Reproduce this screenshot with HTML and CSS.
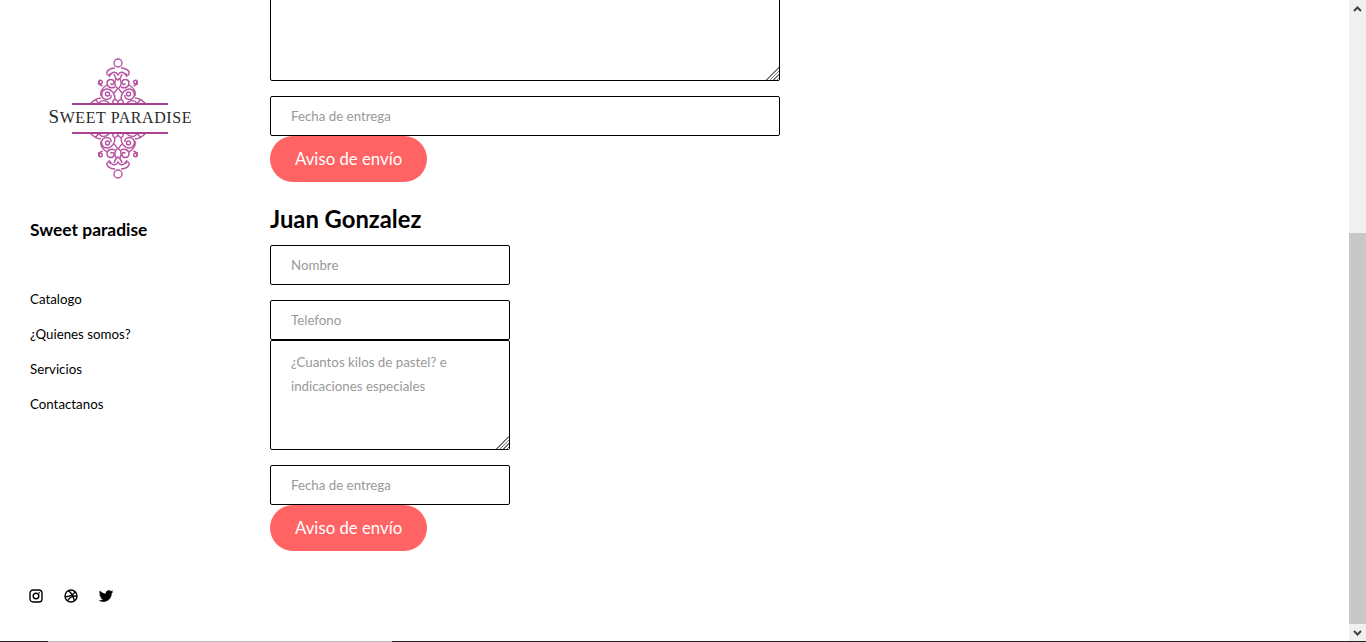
FILE: index.html
```html
<!DOCTYPE html>
<html lang="es">
<head>
    <meta charset="UTF-8">
    <meta name="viewport" content="width=device-width, initial-scale=1.0">
    <title>Sweet paradise</title>
    <link rel="stylesheet" href="styles.css">
</head>
<body>
    <div class="frame">
        <aside class="sidebar">
            <svg class="logo" width="150" height="134" viewBox="0 0 150 134">
                <defs>
                    <g id="ornament">
                        <circle class="ring" cx="0" cy="-41" r="4"/>
                        <path d="M-3 -36C-8 -36 -12 -33 -11 -30C-10 -28 -7 -29 -8 -31M3 -36C8 -36 12 -33 11 -30C10 -28 7 -29 8 -31"/>
                        <path d="M-9 -27C-6 -33 -2 -33 0 -29C2 -33 6 -33 9 -27M-4 -30C-3 -27 -2 -25 0 -24C2 -25 3 -27 4 -30"/>
                        <path d="M-2 -25C-4 -21 -3 -18 -1 -16M2 -25C4 -21 3 -18 1 -16"/>
                        <path d="M-3 -17C-7 -15 -11 -17 -11 -21C-11 -25 -5 -26 -4 -22C-3.500 -20 -6 -18.500 -7.500 -20.500"/>
                        <path d="M3 -17C7 -15 11 -17 11 -21C11 -25 5 -26 4 -22C3.500 -20 6 -18.500 7.500 -20.500"/>
                        <path d="M-11 -19C-16 -16 -18 -12 -17 -8M11 -19C16 -16 18 -12 17 -8"/>
                        <path d="M-18 -24L-19.500 -20L-15.500 -18M18 -24L19.500 -20L15.500 -18"/>
                        <circle cx="-17.500" cy="-22" r="1.800"/>
                        <circle cx="17.500" cy="-22" r="1.800"/>
                        <path d="M-3 -5C-3 -11 -7 -15 -11 -15C-16 -15 -18 -9 -15 -6C-12 -3 -6 -5 -7 -9"/>
                        <path d="M3 -5C3 -11 7 -15 11 -15C16 -15 18 -9 15 -6C12 -3 6 -5 7 -9"/>
                        <circle class="dot" cx="-10.500" cy="-10" r="2"/>
                        <circle class="dot" cx="10.500" cy="-10" r="2"/>
                        <path d="M-4 -11C-2 -13 -1 -15 0 -16C1 -15 2 -13 4 -11"/>
                        <path d="M-5 0C-6 -5 -2 -6 0 -2C2 -6 6 -5 5 0M0 -2L0 1"/>
                        <path d="M-9 -1C-12 -4 -16 -4 -18 -2C-19 0 -16 1 -15 -1M9 -1C12 -4 16 -4 18 -2C19 0 16 1 15 -1"/>
                        <path d="M-17 -6C-21 -6 -25 -3 -28 0M17 -6C21 -6 25 -3 28 0M-22 -4C-21 -2 -20 -1 -18 0M22 -4C21 -2 20 -1 18 0"/>
                    </g>
                </defs>
                <g class="logo-art" transform="translate(-48 -47)">
                    <use href="#ornament" transform="translate(118 104)"/>
                    <use href="#ornament" transform="translate(118 133) scale(1 -1)"/>
                </g>
                <rect class="logo-bar" x="24" y="56" width="96" height="2"/>
                <rect class="logo-bar" x="24" y="85" width="96" height="2"/>
                <text class="logo-text" x="0.5" y="76" textLength="143"><tspan class="logo-cap">S</tspan>WEET PARADISE</text>
            </svg>
            <h1 class="brand">Sweet paradise</h1>
            <nav class="nav">
                <a href="#">Catalogo</a>
                <a href="#">¿Quienes somos?</a>
                <a href="#">Servicios</a>
                <a href="#">Contactanos</a>
            </nav>
            <div class="social">
                <svg width="14" height="14" viewBox="0 0 14 14" class="ico">
                    <rect x="1" y="1" width="12" height="12" rx="3.200"/>
                    <circle cx="7" cy="7" r="2.800"/>
                    <circle class="ico-fill" cx="10.300" cy="3.700" r="0.700"/>
                </svg>
                <svg width="14" height="14" viewBox="0 0 14 14" class="ico">
                    <circle cx="7" cy="7" r="6"/>
                    <path d="M4.600 1.500C6.800 3.800 8.200 5.800 9 7.200C10.400 6.800 11.900 6.900 13 7.400M1.100 7.800C4.800 7.600 9 6 11.200 2.800M3.400 11.900C4.600 9.700 6.600 8 9 7.200C9.600 8.800 10 10.400 10.200 12.200"/>
                </svg>
                <svg width="14" height="14" viewBox="0 0 24 24" class="ico-solid">
                    <path d="M23.953 4.57a10 10 0 01-2.825.775 4.958 4.958 0 002.163-2.723c-.951.555-2.005.959-3.127 1.184a4.92 4.92 0 00-8.384 4.482C7.69 8.095 4.067 6.13 1.64 3.162a4.822 4.822 0 00-.666 2.475c0 1.71.87 3.213 2.188 4.096a4.904 4.904 0 01-2.228-.616v.06a4.923 4.923 0 003.946 4.827 4.996 4.996 0 01-2.212.085 4.936 4.936 0 004.604 3.417 9.867 9.867 0 01-6.102 2.105c-.39 0-.779-.023-1.17-.067a13.995 13.995 0 007.557 2.209c9.053 0 13.998-7.496 13.998-13.985 0-.21 0-.42-.015-.63A9.935 9.935 0 0024 4.59z"/>
                </svg>
            </div>
        </aside>

        <main class="content">
            <form class="order order-wide">
                <textarea class="field area" placeholder="¿Cuantos kilos de pastel? e indicaciones especiales"></textarea>
                <input class="field date" type="text" placeholder="Fecha de entrega">
                <button class="send" type="button">Aviso de envío</button>
            </form>
            <h2 class="person">Juan Gonzalez</h2>
            <form class="order">
                <input class="field" type="text" placeholder="Nombre">
                <input class="field field-tight" type="text" placeholder="Telefono">
                <textarea class="field area" placeholder="¿Cuantos kilos de pastel? e indicaciones especiales"></textarea>
                <input class="field date" type="text" placeholder="Fecha de entrega">
                <button class="send" type="button">Aviso de envío</button>
            </form>
        </main>

        <div class="scrollbar">
            <div class="scroll-btn">
                <svg width="9" height="6" viewBox="0 0 9 6"><path d="M1 5L4.500 1.500L8 5"/></svg>
            </div>
            <div class="scroll-track"></div>
            <div class="scroll-thumb"></div>
            <div class="scroll-btn">
                <svg width="9" height="6" viewBox="0 0 9 6"><path d="M1 1L4.500 4.500L8 1"/></svg>
            </div>
        </div>
    </div>

    <div class="edge"><span class="edge-dark"></span><span class="edge-light"></span><span class="edge-rest"></span></div>
</body>
</html>
```

FILE: styles.css
```css
html, body {
    height: 100%;
}

body {
    margin: 0;
    display: flex;
    flex-direction: column;
    overflow: hidden;
    font-family: "Lato", "Noto Sans", sans-serif;
    font-size: 13.3px;
    color: #000;
    background: #fff;
}

.frame {
    flex: 1;
    min-height: 0;
    display: flex;
}

/* Barra lateral */
.sidebar {
    width: 240px;
    flex-shrink: 0;
    display: flex;
    flex-direction: column;
    padding: 47px 0 0 30px;
    box-sizing: border-box;
}

.logo {
    margin-left: 18px;
    display: block;
}

.logo-art {
    fill: none;
    stroke: #b552a0;
    stroke-width: 1.4;
    filter: blur(0.3px);
}

.logo-art .ring {
    stroke-width: 1.8;
}

.logo-art .dot {
    fill: #b552a0;
}

.logo-bar {
    fill: #a9418f;
}

.logo-text {
    font-family: "Liberation Serif", serif;
    font-size: 16px;
    fill: #2a2a2a;
}

.logo-cap {
    font-size: 19px;
}

.brand {
    margin: 34px 0 0;
    font-size: 17.4px;
    line-height: 30px;
    font-weight: 700;
}

.nav {
    display: flex;
    flex-direction: column;
    gap: 15px;
    margin-top: 44px;
}

.nav a {
    color: #000;
    text-decoration: none;
    line-height: 20px;
}

.social {
    display: flex;
    gap: 21px;
    margin-top: auto;
    margin-bottom: 38px;
    margin-left: -1px;
}

.ico {
    fill: none;
    stroke: #000;
    stroke-width: 1.4;
}

.ico .ico-fill {
    fill: #000;
    stroke: none;
}

.ico-solid {
    fill: #000;
    stroke: #000;
    stroke-width: 0.5;
}

/* Formularios */
.content {
    flex: 1;
    min-width: 0;
    display: flex;
    flex-direction: column;
    justify-content: flex-end;
    overflow: hidden;
    padding: 0 0 90px 30px;
}

.order {
    flex-shrink: 0;
    display: flex;
    flex-direction: column;
    align-items: flex-start;
    width: 240px;
}

.order-wide {
    width: 510px;
}

.field {
    width: 100%;
    height: 40px;
    flex-shrink: 0;
    box-sizing: border-box;
    border: 1px solid #000;
    border-radius: 2px;
    padding: 0 20px;
    margin-bottom: 15px;
    font-family: inherit;
    font-size: 13.3px;
    color: #000;
    background: #fff;
    outline: none;
}

.field-tight {
    margin-bottom: 0;
}

.field::placeholder {
    color: #999;
    opacity: 1;
}

.area {
    display: block;
    height: 110px;
    padding: 9px 20px;
    line-height: 24px;
}

.area::-webkit-resizer {
    background:
        linear-gradient(135deg, #fff 50%, transparent 50%),
        repeating-linear-gradient(135deg, #777 0, #777 1px, #fff 1px, #fff 2.4px);
}

.date {
    margin-bottom: 0;
}

.send {
    height: 46px;
    padding: 0 25px 2px;
    border: 0;
    border-radius: 23px;
    background: #ff6363;
    color: #fff;
    font-family: inherit;
    font-size: 16.8px;
}

.person {
    flex-shrink: 0;
    margin: 21px 0 10px;
    font-size: 23.8px;
    line-height: 32px;
    font-weight: 700;
}

/* Barra de desplazamiento */
.scrollbar {
    width: 17px;
    flex-shrink: 0;
    display: flex;
    flex-direction: column;
    background: #f0f0f0;
}

.scroll-btn {
    height: 17px;
    flex-shrink: 0;
    display: flex;
    align-items: center;
    justify-content: center;
}

.scroll-btn path {
    fill: none;
    stroke: #404040;
    stroke-width: 2;
}

.scroll-track {
    height: 216px;
    flex-shrink: 0;
}

.scroll-thumb {
    flex: 1;
    background: #c8c8c8;
}

/* Linea del borde inferior */
.edge {
    height: 1px;
    flex-shrink: 0;
    display: flex;
}

.edge-dark {
    width: 48px;
    background: #222;
}

.edge-light {
    width: 344px;
    background: #bbb;
}

.edge-rest {
    flex: 1;
    background: #222;
}
```
